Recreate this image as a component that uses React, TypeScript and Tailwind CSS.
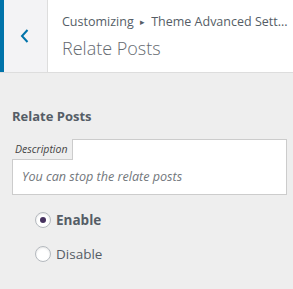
export default function App() {
  return (
    <div className="w-[293px] h-[289px] bg-[#eeeeee] text-[#555d66] overflow-hidden" style={{ fontFamily: '"Open Sans", "Noto Sans", sans-serif' }}>
      <div className="flex h-[73px] bg-white border-b border-[#dddddd]">
        <div className="w-[48px] shrink-0 bg-[#f3f3f5] border-l-4 border-l-[#0073aa] border-r border-r-[#dddddd] flex items-center justify-center">
          <svg width="12" height="16" viewBox="0 0 12 16" className="ml-[-1px]">
            <polyline points="8.5,2 3,8 8.5,14" fill="none" stroke="#0073aa" strokeWidth="2" />
          </svg>
        </div>
        <div className="min-w-0 flex-1 pl-[14px] pt-[12px]">
          <div className="text-[12.5px] leading-[20px] whitespace-nowrap">Customizing <span className="text-[9px] align-[1px] mx-[3px]">▸</span> Theme Advanced Sett...</div>
          <div className="text-[18px] leading-[28px] font-light mt-[2px] text-[#656a70]">Relate Posts</div>
        </div>
      </div>
      <div className="px-[12px] pt-[33px]">
        <div className="text-[13px] leading-[20px] font-bold">Relate Posts</div>
        <div className="mt-[13px] w-[275px]">
          <div className="flex h-[21px]">
            <div className="w-[61px] border-r border-b border-[#cccccc] pl-[3px] text-[10.5px] leading-[20px] italic text-[#444]">Description</div>
            <div className="flex-1 bg-white border-t border-r border-[#cccccc]"></div>
          </div>
          <div className="bg-white border-l border-r border-b border-[#cccccc] h-[35px] pl-[9px] text-[12.6px] leading-[33px] italic text-[#72777c]">You can stop the relate posts</div>
        </div>
        <div className="pl-[23px] pt-[15px] flex flex-col gap-[14px]">
          <label className="flex items-center h-[20px] gap-[5px]">
            <span className="w-[16px] h-[16px] rounded-full border border-[#b4b9be] bg-white shadow-[inset_0_1px_2px_rgba(0,0,0,0.1)] flex items-center justify-center">
              <span className="w-[6px] h-[6px] rounded-full bg-[#46325f]"></span>
            </span>
            <span className="text-[13.5px] font-bold">Enable</span>
          </label>
          <label className="flex items-center h-[20px] gap-[5px]">
            <span className="w-[16px] h-[16px] rounded-full border border-[#b4b9be] bg-white shadow-[inset_0_1px_2px_rgba(0,0,0,0.1)]"></span>
            <span className="text-[13.5px]">Disable</span>
          </label>
        </div>
      </div>
    </div>
  );
}
